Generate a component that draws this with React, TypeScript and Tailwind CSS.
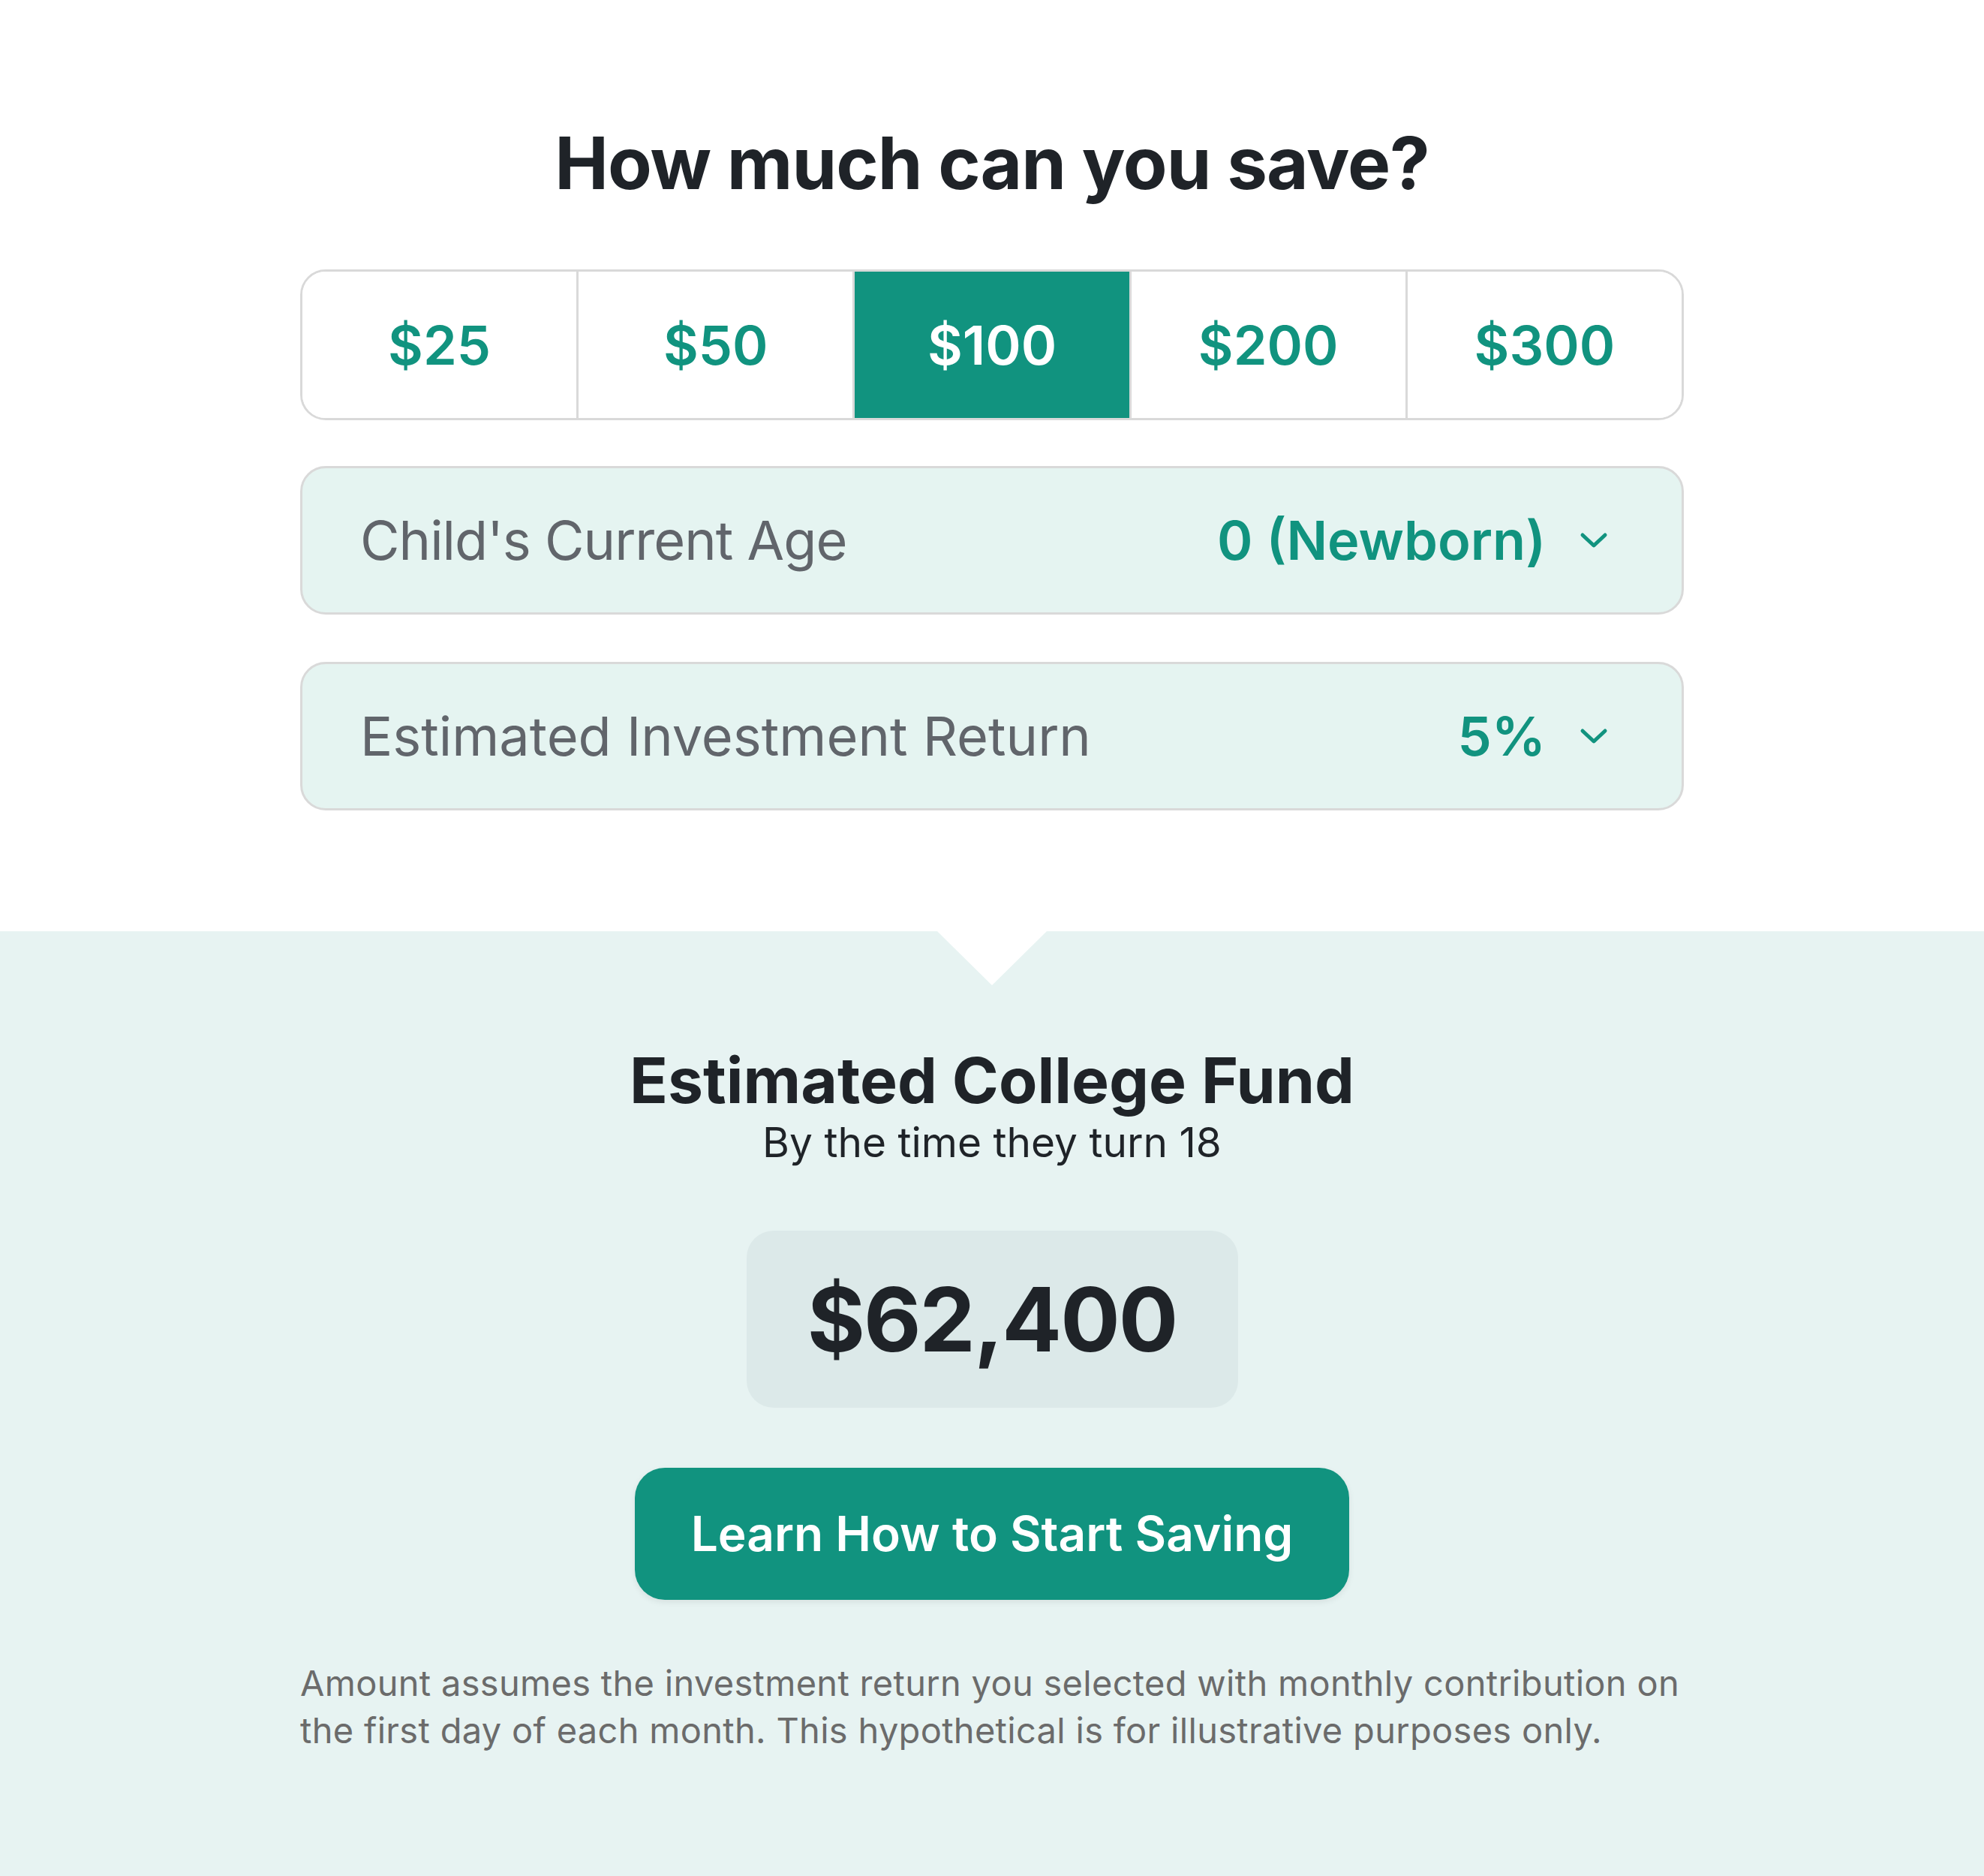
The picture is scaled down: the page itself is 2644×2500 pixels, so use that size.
import { useState } from 'react'

// ---------------------------------------------------------------------------
// College savings calculator — contribution picker, two selects and result.
// ---------------------------------------------------------------------------

const AMOUNTS = [25, 50, 100, 200, 300]

const FONT = "font-['Inter','Liberation_Sans',sans-serif]"

function Chevron() {
  return (
    <svg width="40" height="24" viewBox="0 0 40 24" fill="none" className="shrink-0">
      <polyline
        points="5,5 20,19 35,5"
        stroke="#11937f"
        strokeWidth="5"
        strokeLinecap="round"
        strokeLinejoin="round"
      />
    </svg>
  )
}

function SelectRow({ label, value, tight }: { label: string; value: string; tight?: boolean }) {
  return (
    <button
      type="button"
      className="flex h-[198px] w-full items-center justify-between rounded-[34px] border-[3px] border-[#d9d9d9] bg-[#e5f4f1] pl-[77px] pr-[97px]"
    >
      <span className={`text-[72px] leading-none text-[#61656b] ${tight ? 'tracking-[-1px]' : ''}`}>
        {label}
      </span>
      <span className="flex items-center gap-[44px]">
        <span className="text-[72px] font-semibold leading-none text-[#11937f]">{value}</span>
        <Chevron />
      </span>
    </button>
  )
}

export default function App() {
  const [amount, setAmount] = useState(100)

  return (
    <div className={`${FONT} flex min-h-[2500px] flex-col bg-white`}>
      <section className="relative flex flex-col items-center bg-white pt-[169px] pb-[161px]">
        <h1 className="text-[96px] font-bold leading-none tracking-[-1px] text-[#1f2328]">
          How much can you save?
        </h1>

        <div className="mt-[94px] flex w-[1844px] flex-col">
          <div className="flex h-[201px] overflow-hidden rounded-[34px] border-[3px] border-[#d9d9d9]">
            {AMOUNTS.map((a, i) => (
              <button
                key={a}
                type="button"
                onClick={() => setAmount(a)}
                className={`flex flex-1 items-center justify-center text-[72px] font-semibold leading-none ${
                  i > 0 ? 'border-l-[3px] border-[#d9d9d9]' : ''
                } ${a === amount ? 'bg-[#11937f] text-white' : 'bg-white text-[#11937f]'}`}
              >
                ${a}
              </button>
            ))}
          </div>

          <div className="mt-[61px]">
            <SelectRow label="Child's Current Age" value="0 (Newborn)" tight />
          </div>
          <div className="mt-[63px]">
            <SelectRow label="Estimated Investment Return" value="5%" />
          </div>
        </div>

        {/* notch pointing into the result panel */}
        <div className="absolute left-1/2 top-full z-10 h-0 w-0 -translate-x-1/2 border-x-[73px] border-t-[72px] border-x-transparent border-t-white" />
      </section>

      <section className="flex flex-1 flex-col items-center bg-[#e7f3f2] pt-[157px]">
        <h2 className="text-[84px] font-bold leading-none text-[#1f2328]">Estimated College Fund</h2>
        <p className="mt-[13px] text-[55px] leading-none text-[#1f2328]">By the time they turn 18</p>

        <div className="mt-[90px] flex h-[236px] w-[655px] items-center justify-center rounded-[36px] bg-[#dce9e9]">
          <span className="text-[118px] font-bold leading-none tracking-[-2px] text-[#1f2328]">$62,400</span>
        </div>

        <button
          type="button"
          className="mt-[80px] flex h-[176px] w-[952px] items-center justify-center rounded-[40px] bg-[#11937f] text-[64px] font-semibold leading-none text-white shadow-[0_3px_8px_rgba(0,0,0,0.08)]"
        >
          Learn How to Start Saving
        </button>

        <p className="mt-[79px] w-[1844px] text-[47px] leading-[63px] tracking-[0.3px] text-[#6b6b6b]">
          Amount assumes the investment return you selected with monthly contribution on
          <br />
          the first day of each month. This hypothetical is for illustrative purposes only.
        </p>
      </section>
    </div>
  )
}
